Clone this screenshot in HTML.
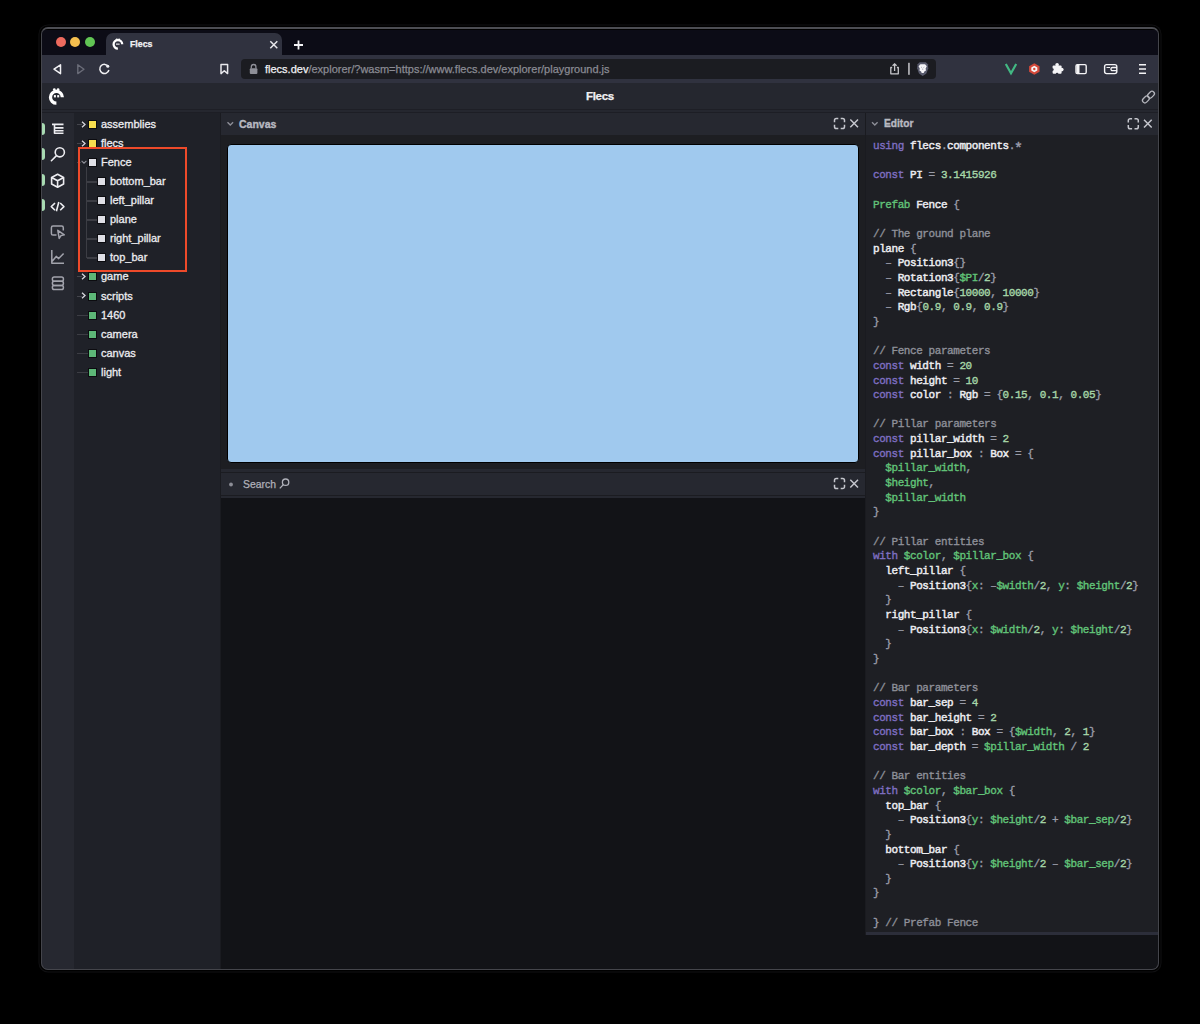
<!DOCTYPE html>
<html><head><meta charset="utf-8">
<style>
*{box-sizing:border-box;margin:0;padding:0}
html,body{width:1200px;height:1024px;background:#000;overflow:hidden;font-family:"Liberation Sans",sans-serif}
.a{position:absolute}
#win{position:absolute;left:0;top:0;width:1200px;height:1024px;clip-path:inset(27px 41px 54px 41px round 7px);background:#0c0c16}
#winb{position:absolute;left:41px;top:27px;width:1118px;height:943px;border-radius:7px;border:1px solid #44454b;border-top:2px solid #4c4d53;pointer-events:none;box-shadow:0 0 0 1.5px #000,0 0 0 2.5px #101012}
svg{position:absolute;overflow:visible}
.t{position:absolute;white-space:pre;line-height:1;-webkit-text-stroke:0.25px currentColor}
.tree{font-size:11px;color:#ececf0;-webkit-text-stroke:0.3px #ececf0}
.code{position:absolute;left:873px;top:139px;font-family:"Liberation Mono",monospace;font-size:11px;letter-spacing:-0.43px;line-height:14.66px;white-space:pre;color:#9a9ca8;-webkit-text-stroke:0.35px currentColor}
.k{color:#7f6fc2}.i{color:#ececf0;-webkit-text-stroke:0.45px currentColor}.n{color:#a6d6a8}.g{color:#62c479}.c{color:#8e9099}
</style></head><body>
<div id="win">
  <!-- tab bar -->
  <div class="a" style="left:41px;top:29px;width:1118px;height:1px;background:#000"></div>
  <div class="a" style="left:55.6px;top:36.8px;width:10px;height:10px;border-radius:50%;background:#ed6a5e"></div>
  <div class="a" style="left:70.4px;top:36.8px;width:10px;height:10px;border-radius:50%;background:#f5bf4f"></div>
  <div class="a" style="left:85.2px;top:36.8px;width:10px;height:10px;border-radius:50%;background:#61c554"></div>
  <div class="a" style="left:106px;top:33px;width:176px;height:22px;background:#30323f;border-radius:7px 7px 0 0"></div>
  <!-- toolbar -->
  <div class="a" style="left:41px;top:55px;width:1118px;height:28px;background:#30323f"></div>
  <div class="a" style="left:241px;top:59px;width:695px;height:20px;background:#1b1c21;border-radius:4px"></div>
  <!-- app header -->
  <div class="a" style="left:41px;top:83px;width:1118px;height:26px;background:#25272f"></div>
  <div class="a" style="left:41px;top:109px;width:1118px;height:1px;background:#1e1f26"></div>
  <div class="a" style="left:41px;top:110px;width:1118px;height:2px;background:#25272f"></div>
  <div class="a" style="left:41px;top:112px;width:1118px;height:1px;background:#1d1e25"></div>
  <!-- icon bar -->
  <div class="a" style="left:41px;top:113px;width:33px;height:860px;background:#262830"></div>
  <!-- tree -->
  <div class="a" style="left:74px;top:113px;width:146px;height:860px;background:#1f2128"></div>
  <div class="a" style="left:220px;top:113px;width:1px;height:860px;background:#1a1b20"></div>
  <!-- canvas panel -->
  <div class="a" style="left:221px;top:113px;width:644px;height:22px;background:#262830"></div>
  <div class="a" style="left:221px;top:135px;width:644px;height:334px;background:#1d1e22"></div>
  <div class="a" style="left:227px;top:144px;width:632px;height:319px;background:#a0c9ee;border:1px solid #000;border-radius:4px"></div>
  <!-- search panel -->
  <div class="a" style="left:221px;top:469px;width:644px;height:3px;background:#262830"></div>
  <div class="a" style="left:221px;top:472px;width:644px;height:1px;background:#1b1c21"></div>
  <div class="a" style="left:221px;top:473px;width:644px;height:22px;background:#262830"></div>
  <div class="a" style="left:221px;top:495px;width:644px;height:1px;background:#1b1c21"></div>
  <div class="a" style="left:221px;top:496px;width:644px;height:2px;background:#262830"></div>
  <div class="a" style="left:221px;top:498px;width:938px;height:480px;background:#121317"></div>
  <div class="a" style="left:865px;top:113px;width:1px;height:822px;background:#1a1b20"></div>
  <!-- editor -->
  <div class="a" style="left:866px;top:113px;width:293px;height:22px;background:#262830"></div>
  <div class="a" style="left:866px;top:135px;width:293px;height:797px;background:#1e1f24"></div>
  <div class="a" style="left:866px;top:932px;width:293px;height:3px;background:#2c2e3a"></div>
  <!-- tab text -->
  <div class="t" style="left:130px;top:40px;font-size:8.8px;font-weight:bold;color:#f2f2f5">Flecs</div>
  <!-- url -->
  <div class="t" style="left:265px;top:63.5px;font-size:11px;color:#8a8b93"><span style="color:#f0f0f3">flecs.dev</span>/explorer/?wasm=https://www.flecs.dev/explorer/playground.js</div>
  <!-- title -->
  <div class="t" style="left:586px;top:91px;font-size:11.5px;font-weight:bold;color:#f0f0f3;letter-spacing:-0.3px">Flecs</div>
  <!-- panel headers -->
  <div class="t" style="left:239px;top:119px;font-size:10.5px;font-weight:bold;color:#b8b9c1;-webkit-text-stroke:0.35px #b8b9c1">Canvas</div>
  <div class="t" style="left:884px;top:119px;font-size:10.2px;font-weight:bold;color:#b8b9c1;-webkit-text-stroke:0.35px #b8b9c1">Editor</div>
  <div class="t" style="left:243px;top:479.5px;font-size:10.4px;color:#b0b1ba">Search</div>

<div class="t tree" style="left:101px;top:118.80px">assemblies</div>
<div class="a" style="left:88px;top:119.80px;width:9px;height:9px;background:#f7de4e;border:1px solid #0c0c10"></div>
<div class="a" style="left:77px;top:123.80px;width:5px;height:1px;background:#44454c"></div>
<svg style="left:81.3px;top:120.60px" width="5" height="7" viewBox="0 0 5 7"><path d="M1 0.8 L4 3.5 L1 6.2" fill="none" stroke="#d8d8de" stroke-width="1.3"/></svg>
<div class="t tree" style="left:101px;top:137.88px">flecs</div>
<div class="a" style="left:88px;top:138.88px;width:9px;height:9px;background:#f7de4e;border:1px solid #0c0c10"></div>
<div class="a" style="left:77px;top:142.88px;width:5px;height:1px;background:#44454c"></div>
<svg style="left:81.3px;top:139.68px" width="5" height="7" viewBox="0 0 5 7"><path d="M1 0.8 L4 3.5 L1 6.2" fill="none" stroke="#d8d8de" stroke-width="1.3"/></svg>
<div class="t tree" style="left:101px;top:156.96px">Fence</div>
<div class="a" style="left:88px;top:157.96px;width:9px;height:9px;background:#dfdfe6;border:1px solid #0c0c10"></div>
<div class="a" style="left:77px;top:161.96px;width:4px;height:1px;background:#44454c"></div>
<svg style="left:81px;top:160.46px" width="6" height="4" viewBox="0 0 6 4"><path d="M0.6 0.8 L3 3.2 L5.4 0.8" fill="none" stroke="#8e8f98" stroke-width="1.1"/></svg>
<div class="t tree" style="left:110px;top:176.04px">bottom_bar</div>
<div class="a" style="left:97px;top:177.04px;width:9px;height:9px;background:#dfdfe6;border:1px solid #0c0c10"></div>
<div class="a" style="left:87px;top:181.04px;width:10px;height:1.5px;background:#3c3d44"></div>
<div class="t tree" style="left:110px;top:195.12px">left_pillar</div>
<div class="a" style="left:97px;top:196.12px;width:9px;height:9px;background:#dfdfe6;border:1px solid #0c0c10"></div>
<div class="a" style="left:87px;top:200.12px;width:10px;height:1.5px;background:#3c3d44"></div>
<div class="t tree" style="left:110px;top:214.20px">plane</div>
<div class="a" style="left:97px;top:215.20px;width:9px;height:9px;background:#dfdfe6;border:1px solid #0c0c10"></div>
<div class="a" style="left:87px;top:219.20px;width:10px;height:1.5px;background:#3c3d44"></div>
<div class="t tree" style="left:110px;top:233.28px">right_pillar</div>
<div class="a" style="left:97px;top:234.28px;width:9px;height:9px;background:#dfdfe6;border:1px solid #0c0c10"></div>
<div class="a" style="left:87px;top:238.28px;width:10px;height:1.5px;background:#3c3d44"></div>
<div class="t tree" style="left:110px;top:252.36px">top_bar</div>
<div class="a" style="left:97px;top:253.36px;width:9px;height:9px;background:#dfdfe6;border:1px solid #0c0c10"></div>
<div class="a" style="left:87px;top:257.36px;width:10px;height:1.5px;background:#3c3d44"></div>
<div class="t tree" style="left:101px;top:271.44px">game</div>
<div class="a" style="left:88px;top:272.44px;width:9px;height:9px;background:#5db777;border:1px solid #0c0c10"></div>
<div class="a" style="left:77px;top:276.44px;width:5px;height:1px;background:#44454c"></div>
<svg style="left:81.3px;top:273.24px" width="5" height="7" viewBox="0 0 5 7"><path d="M1 0.8 L4 3.5 L1 6.2" fill="none" stroke="#d8d8de" stroke-width="1.3"/></svg>
<div class="t tree" style="left:101px;top:290.52px">scripts</div>
<div class="a" style="left:88px;top:291.52px;width:9px;height:9px;background:#5db777;border:1px solid #0c0c10"></div>
<div class="a" style="left:77px;top:295.52px;width:5px;height:1px;background:#44454c"></div>
<svg style="left:81.3px;top:292.32px" width="5" height="7" viewBox="0 0 5 7"><path d="M1 0.8 L4 3.5 L1 6.2" fill="none" stroke="#d8d8de" stroke-width="1.3"/></svg>
<div class="t tree" style="left:101px;top:309.60px">1460</div>
<div class="a" style="left:88px;top:310.60px;width:9px;height:9px;background:#5db777;border:1px solid #0c0c10"></div>
<div class="a" style="left:77px;top:314.60px;width:11px;height:1.5px;background:#3c3d44"></div>
<div class="t tree" style="left:101px;top:328.68px">camera</div>
<div class="a" style="left:88px;top:329.68px;width:9px;height:9px;background:#5db777;border:1px solid #0c0c10"></div>
<div class="a" style="left:77px;top:333.68px;width:11px;height:1.5px;background:#3c3d44"></div>
<div class="t tree" style="left:101px;top:347.76px">canvas</div>
<div class="a" style="left:88px;top:348.76px;width:9px;height:9px;background:#5db777;border:1px solid #0c0c10"></div>
<div class="a" style="left:77px;top:352.76px;width:11px;height:1.5px;background:#3c3d44"></div>
<div class="t tree" style="left:101px;top:366.84px">light</div>
<div class="a" style="left:88px;top:367.84px;width:9px;height:9px;background:#5db777;border:1px solid #0c0c10"></div>
<div class="a" style="left:77px;top:371.84px;width:11px;height:1.5px;background:#3c3d44"></div>
<div class="a" style="left:85.5px;top:166.96px;width:1.5px;height:90.90px;background:#3c3d44"></div>
<div class="a" style="left:78px;top:147px;width:109px;height:125px;border:2px solid #ee4a2a"></div>
  <!-- tab logo -->
  <svg style="left:0;top:0" width="1" height="1"><g fill="none" stroke="#fff" stroke-width="2.3"><path d="M122.2 44.3 A4.3 4.3 0 1 0 117.9 48.6"/></g><circle cx="116.6" cy="39.4" r="0.9" fill="#fff"/><circle cx="119.2" cy="39.4" r="0.9" fill="#fff"/><rect x="116" y="43.5" width="3.6" height="1.3" fill="#d8d8dc"/></svg>
  <!-- tab close + new -->
  <svg style="left:0;top:0" width="1" height="1"><path d="M270.3 41.3 L277.3 48.3 M277.3 41.3 L270.3 48.3" stroke="#e8e8ec" stroke-width="1.5"/><path d="M298.5 40.5 V49.5 M294 45 H303" stroke="#f4f4f6" stroke-width="1.8"/></svg>
  <!-- nav -->
  <svg style="left:0;top:0" width="1" height="1"><path d="M60.5 64.8 L54 69.2 L60.5 73.6 Z" fill="none" stroke="#f0f0f3" stroke-width="1.5" stroke-linejoin="round"/><path d="M77.8 64.8 L84 69.2 L77.8 73.6 Z" fill="none" stroke="#6a6c78" stroke-width="1.4" stroke-linejoin="round"/><path d="M108.3 66.5 A4.6 4.6 0 1 0 108.9 70" fill="none" stroke="#f0f0f3" stroke-width="1.5"/><circle cx="107.8" cy="66.2" r="1.5" fill="#f0f0f3"/></svg>
  <!-- bookmark -->
  <svg style="left:0;top:0" width="1" height="1"><path d="M221 64.5 H227.6 V73.6 L224.3 70.8 L221 73.6 Z" fill="none" stroke="#e8e8ec" stroke-width="1.5" stroke-linejoin="round"/></svg>
  <!-- lock -->
  <svg style="left:0;top:0" width="1" height="1"><path d="M251.3 68.5 V66.8 A2.3 2.3 0 0 1 255.9 66.8 V68.5" fill="none" stroke="#8f9098" stroke-width="1.3"/><rect x="249.8" y="68.3" width="7.6" height="5.6" rx="1" fill="#8f9098"/></svg>
  <!-- share, sep, brave -->
  <svg style="left:0;top:0" width="1" height="1"><path d="M892.2 67.5 H890.8 V73.8 H898.3 V67.5 H896.9" fill="none" stroke="#c8c8cc" stroke-width="1.3" stroke-linejoin="round"/><path d="M894.6 71 V63.8 M892.6 65.8 L894.6 63.8 L896.6 65.8" fill="none" stroke="#c8c8cc" stroke-width="1.3"/><rect x="908.2" y="62.8" width="1.5" height="12" fill="#c8c8cc"/><path d="M917.6 64.3 L919.6 62.3 H925.8 L927.8 64.3 L928.3 68.2 L926.4 73.5 L922.7 76 L919 73.5 L917.1 68.2 Z" fill="#585a6c"/><path d="M918.6 66.3 L920.4 64.2 H925 L926.8 66.3 L925.6 68.6 L926 70.4 L924.3 71.6 L923.7 72.9 H921.7 L921.1 71.6 L919.4 70.4 L919.8 68.6 Z" fill="#f6f6f8"/><path d="M921 67 L922 67.6 M924.4 67 L923.4 67.6 M922.7 68.5 V70" stroke="#9a9ba8" stroke-width="0.7"/></svg>
  <!-- extensions -->
  <svg style="left:0;top:0" width="1" height="1"><path d="M1005.8 64 L1011 73.3 L1016.2 64" fill="none" stroke="#42b883" stroke-width="2.2"/><path d="M1034.3 63.3 L1039.5 66.3 V71.7 L1034.3 74.7 L1029.1 71.7 V66.3 Z" fill="#d4493a"/><path d="M1034.3 65.8 L1037.3 67.5 V70.5 L1034.3 72.2 L1031.3 70.5 V67.5 Z" fill="#f6f6f6"/><circle cx="1034.3" cy="69" r="1.2" fill="#d4493a"/><rect x="1052.6" y="65.6" width="9" height="8.2" rx="1" fill="#f4f4f6"/><circle cx="1057.1" cy="64.8" r="1.8" fill="#f4f4f6"/><circle cx="1061.8" cy="69.6" r="1.8" fill="#f4f4f6"/><circle cx="1052.4" cy="69.6" r="1.3" fill="#30323f"/><circle cx="1057.1" cy="74" r="1.3" fill="#30323f"/><rect x="1076" y="64.6" width="10.2" height="9" rx="1.3" fill="none" stroke="#f4f4f6" stroke-width="1.4"/><rect x="1076.5" y="65" width="3" height="8.2" fill="#f4f4f6"/><rect x="1104.6" y="64.6" width="12.2" height="9" rx="2" fill="none" stroke="#f4f4f6" stroke-width="1.4"/><path d="M1117 67.5 H1112.5 A1.6 1.6 0 0 0 1112.5 70.7 H1117" fill="none" stroke="#f4f4f6" stroke-width="1.3"/><path d="M1106.5 67.5 H1110" stroke="#f4f4f6" stroke-width="1"/><path d="M1139 64.8 H1146 M1139 69 H1146 M1139 73.2 H1146" stroke="#f4f4f6" stroke-width="1.6"/></svg>
  <!-- header logo -->
  <svg style="left:0;top:0" width="1" height="1"><path d="M62.3 97.3 A5.9 5.9 0 1 0 56.4 103.2" fill="none" stroke="#fff" stroke-width="3.3"/><circle cx="54.3" cy="89.6" r="1.35" fill="#fff"/><circle cx="58.1" cy="89.6" r="1.35" fill="#fff"/><rect x="53.9" y="95.1" width="2" height="2.3" fill="#fff"/><rect x="57.2" y="95.1" width="2" height="2.3" fill="#fff"/></svg>
  <!-- link icon -->
  <svg style="left:0;top:0" width="1" height="1"><g fill="none" stroke="#b4b5bc" stroke-width="1.3"><rect x="1147.2" y="92.3" width="7.6" height="4.8" rx="2.4" transform="rotate(-45 1151 94.7)"/><rect x="1142.1" y="97" width="7.6" height="4.8" rx="2.4" transform="rotate(-45 1145.9 99.4)"/></g></svg>
  <!-- icon bar markers -->
  <div class="a" style="left:39px;top:122.5px;width:5.5px;height:12px;border-radius:3px;background:#a8dab2"></div>
  <div class="a" style="left:39px;top:148px;width:5.5px;height:12px;border-radius:3px;background:#a8dab2"></div>
  <div class="a" style="left:39px;top:173.5px;width:5.5px;height:12px;border-radius:3px;background:#a8dab2"></div>
  <div class="a" style="left:39px;top:199px;width:5.5px;height:12px;border-radius:3px;background:#a8dab2"></div>
  <!-- icon bar icons -->
  <svg style="left:0;top:0" width="1" height="1"><g fill="none" stroke="#ececf0" stroke-width="1.6" stroke-linecap="butt" stroke-linejoin="round">
    <path d="M52 124.4 H63.5 M54.5 124.4 V133.3 H63.5 M54.5 127.9 H63.5 M54.5 130.8 H63.5"/>
    <circle cx="59.8" cy="152.3" r="4.6"/><path d="M56.5 155.6 L51.4 160.7" stroke-linecap="round"/>
    <path d="M57.6 174.2 L63.6 177.5 V184 L57.6 187.3 L51.6 184 V177.5 Z M51.6 177.5 L57.6 180.8 L63.6 177.5 M57.6 180.8 V187.3"/>
    <path d="M55 203 L51.3 206.6 L55 210.2 M60.2 203 L63.9 206.6 L60.2 210.2 M58.8 202 L56.4 211.2"/>
  </g><g fill="none" stroke="#a2a3ac" stroke-width="1.5" stroke-linejoin="round">
    <path d="M56.5 235 H53 A1.6 1.6 0 0 1 51.4 233.4 V227.7 A1.6 1.6 0 0 1 53 226.1 H61.7 A1.6 1.6 0 0 1 63.3 227.7 V230.5"/>
    <path d="M57.8 230.3 L64.3 234.8 L61 235.6 L59.2 238.4 Z"/>
    <path d="M51.8 250 V263.2 H64 M52.2 261.2 L56.2 256.4 L58.7 258.6 L63.6 253.6"/>
    <rect x="52.4" y="277" width="11" height="4.2" rx="1.8"/><rect x="52.4" y="281.2" width="11" height="4.2" rx="1.8"/><rect x="52.4" y="285.4" width="11" height="4.2" rx="1.8"/>
  </g></svg>
  <!-- panel header icons -->
  <svg style="left:0;top:0" width="1" height="1"><g fill="none" stroke="#8c8d96" stroke-width="1.4"><path d="M227.5 122.3 L230.3 125.1 L233.1 122.3"/><path d="M872 122.3 L874.8 125.1 L877.6 122.3"/></g><circle cx="231" cy="484.5" r="1.9" fill="#8c8d96"/>
  <g fill="none" stroke="#c4c5cc" stroke-width="1.5">
    <path d="M834.5 122.3 V120.3 A1.8 1.8 0 0 1 836.3 118.5 H838.3 M840.7 118.5 H842.7 A1.8 1.8 0 0 1 844.5 120.3 V122.3 M844.5 124.7 V126.7 A1.8 1.8 0 0 1 842.7 128.5 H840.7 M838.3 128.5 H836.3 A1.8 1.8 0 0 1 834.5 126.7 V124.7"/>
    <path d="M850.3 119.5 L858 127.2 M858 119.5 L850.3 127.2"/>
    <path d="M834.5 482.3 V480.3 A1.8 1.8 0 0 1 836.3 478.5 H838.3 M840.7 478.5 H842.7 A1.8 1.8 0 0 1 844.5 480.3 V482.3 M844.5 484.7 V486.7 A1.8 1.8 0 0 1 842.7 488.5 H840.7 M838.3 488.5 H836.3 A1.8 1.8 0 0 1 834.5 486.7 V484.7"/>
    <path d="M850.3 479.8 L858 487.5 M858 479.8 L850.3 487.5"/>
    <path d="M1128.3 122.6 V120.6 A1.8 1.8 0 0 1 1130.1 118.8 H1132.1 M1134.5 118.8 H1136.5 A1.8 1.8 0 0 1 1138.3 120.6 V122.6 M1138.3 125.00000000000001 V127.00000000000001 A1.8 1.8 0 0 1 1136.5 128.8 H1134.5 M1132.1 128.8 H1130.1 A1.8 1.8 0 0 1 1128.3 127.00000000000001 V125.00000000000001"/>
    <path d="M1144 119.8 L1151.7 127.5 M1151.7 119.8 L1144 127.5"/>
  </g>
  <g fill="none" stroke="#b0b1ba" stroke-width="1.3"><circle cx="285.6" cy="482.2" r="3.2"/><path d="M283.3 484.6 L279.8 488.4"/></g></svg>

<div class="code"><span class="k">using</span> <span class="i">flecs</span>.<span class="i">components</span>.<span style="display:inline-block;transform:translateY(3px) scale(1.35);color:#9a9cab">*</span>

<span class="k">const</span> <span class="i">PI</span> = <span class="n">3.1415926</span>

<span class="g">Prefab</span> <span class="i">Fence</span> {

<span class="c">// The ground plane</span>
<span class="i">plane</span> {
  – <span class="i">Position3</span>{}
  – <span class="i">Rotation3</span>{<span class="g">$PI</span>/<span class="n">2</span>}
  – <span class="i">Rectangle</span>{<span class="n">10000</span>, <span class="n">10000</span>}
  – <span class="i">Rgb</span>{<span class="n">0.9</span>, <span class="n">0.9</span>, <span class="n">0.9</span>}
}

<span class="c">// Fence parameters</span>
<span class="k">const</span> <span class="i">width</span> = <span class="n">20</span>
<span class="k">const</span> <span class="i">height</span> = <span class="n">10</span>
<span class="k">const</span> <span class="i">color</span> : <span class="i">Rgb</span> = {<span class="n">0.15</span>, <span class="n">0.1</span>, <span class="n">0.05</span>}

<span class="c">// Pillar parameters</span>
<span class="k">const</span> <span class="i">pillar_width</span> = <span class="n">2</span>
<span class="k">const</span> <span class="i">pillar_box</span> : <span class="i">Box</span> = {
  <span class="g">$pillar_width</span>,
  <span class="g">$height</span>,
  <span class="g">$pillar_width</span>
}

<span class="c">// Pillar entities</span>
<span class="k">with</span> <span class="g">$color</span>, <span class="g">$pillar_box</span> {
  <span class="i">left_pillar</span> {
    – <span class="i">Position3</span>{<span class="g">x</span>: –<span class="g">$width</span>/<span class="n">2</span>, <span class="g">y</span>: <span class="g">$height</span>/<span class="n">2</span>}
  }
  <span class="i">right_pillar</span> {
    – <span class="i">Position3</span>{<span class="g">x</span>: <span class="g">$width</span>/<span class="n">2</span>, <span class="g">y</span>: <span class="g">$height</span>/<span class="n">2</span>}
  }
}

<span class="c">// Bar parameters</span>
<span class="k">const</span> <span class="i">bar_sep</span> = <span class="n">4</span>
<span class="k">const</span> <span class="i">bar_height</span> = <span class="n">2</span>
<span class="k">const</span> <span class="i">bar_box</span> : <span class="i">Box</span> = {<span class="g">$width</span>, <span class="n">2</span>, <span class="n">1</span>}
<span class="k">const</span> <span class="i">bar_depth</span> = <span class="g">$pillar_width</span> / <span class="n">2</span>

<span class="c">// Bar entities</span>
<span class="k">with</span> <span class="g">$color</span>, <span class="g">$bar_box</span> {
  <span class="i">top_bar</span> {
    – <span class="i">Position3</span>{<span class="g">y</span>: <span class="g">$height</span>/<span class="n">2</span> + <span class="g">$bar_sep</span>/<span class="n">2</span>}
  }
  <span class="i">bottom_bar</span> {
    – <span class="i">Position3</span>{<span class="g">y</span>: <span class="g">$height</span>/<span class="n">2</span> – <span class="g">$bar_sep</span>/<span class="n">2</span>}
  }
}

} <span class="c">// Prefab Fence</span></div>
<!--CONTENT-->
</div>
<div id="winb"></div>
</body></html>
